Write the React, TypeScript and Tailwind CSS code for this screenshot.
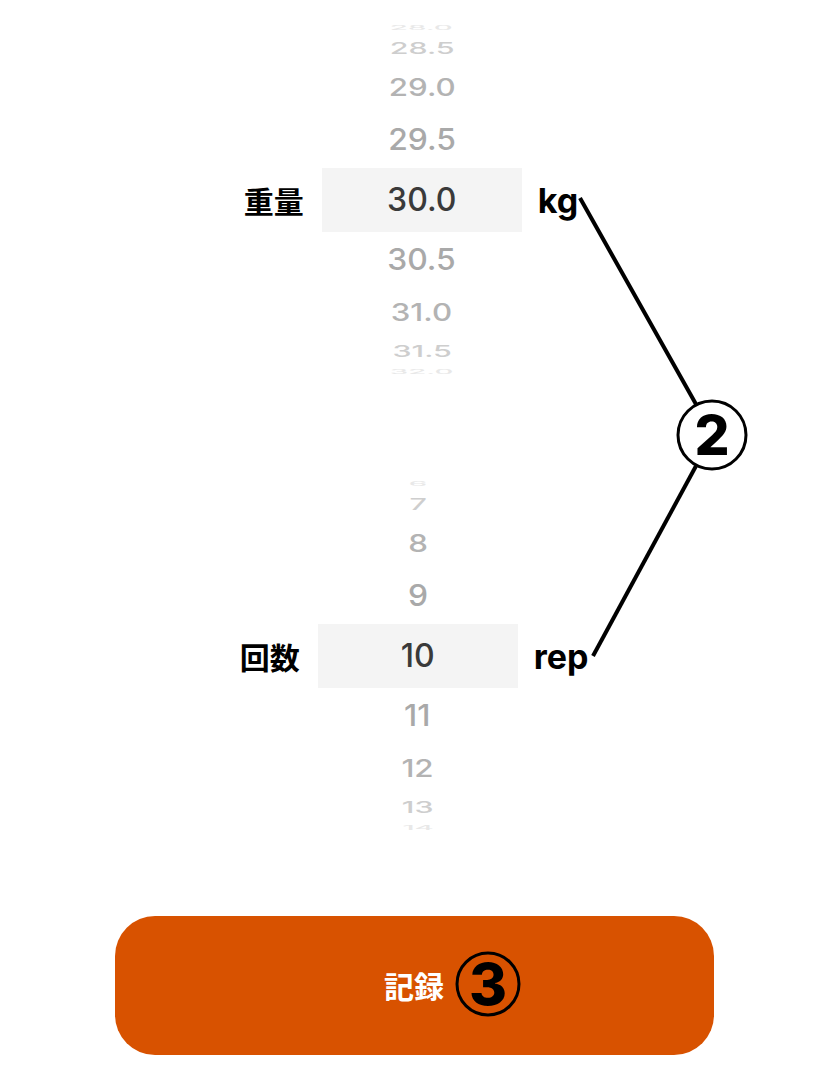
import React from "react";

const STEP = 20; // degrees between rows on the drum
const RADIUS = 175;
const SHADES = ["#3a3a3a", "#a9a9a9", "#b3b3b3", "#cecece", "#e8e8e8"];

const weights = ["28.0", "28.5", "29.0", "29.5", "30.0", "30.5", "31.0", "31.5", "32.0"];
const reps = ["6", "7", "8", "9", "10", "11", "12", "13", "14"];

const Wheel = ({ values, selected }: { values: string[]; selected: number }) => {
  return (
    <div className="grid h-[352px] w-[200px] place-items-center">
      <div className="col-start-1 row-start-1 h-16 w-[200px] bg-[#f4f4f4]" />
      {values.map((value, index) => {
        const k = index - selected;
        const rad = (k * STEP * Math.PI) / 180;
        const y = RADIUS * Math.sin(rad);
        const sy = Math.cos(rad);
        const sx = 0.9 + 0.1 * sy;
        return (
          <span
            key={value}
            className="col-start-1 row-start-1 font-['Inter',sans-serif] text-[32px] font-medium leading-none"
            style={{
              transform: `translateY(${y}px) scale(${sx}, ${sy})`,
              color: SHADES[Math.abs(k)],
            }}
          >
            {value}
          </span>
        );
      })}
    </div>
  );
};

const PickerRow = ({
  label,
  unit,
  values,
  selected,
  className = "",
}: {
  label: string;
  unit: string;
  values: string[];
  selected: number;
  className?: string;
}) => (
  <div className={`flex items-center justify-center ${className}`}>
    <span className="mr-[18px] font-['Noto_Sans_CJK_JP',sans-serif] text-[30px] font-bold text-black">
      {label}
    </span>
    <Wheel values={values} selected={selected} />
    <span className="ml-4 font-['Inter',sans-serif] text-[34px] font-bold text-black">
      {unit}
    </span>
  </div>
);

const Annotations = () => (
  <svg
    className="pointer-events-none absolute inset-0"
    width="828"
    height="1077"
    viewBox="0 0 828 1077"
  >
    <line x1="580" y1="198" x2="697" y2="406" stroke="#000" strokeWidth="4" />
    <line x1="696" y1="466" x2="593" y2="656" stroke="#000" strokeWidth="4" />
    <circle cx="712" cy="435" r="34" fill="#fff" stroke="#000" strokeWidth="3" />
    <text
      x="712"
      y="455"
      textAnchor="middle"
      fontFamily="Inter, sans-serif"
      fontWeight="800"
      fontSize="55"
      fill="#000"
    >
      2
    </text>
    <circle cx="488" cy="984" r="31" fill="none" stroke="#000" strokeWidth="3" />
    <text
      x="488"
      y="1005"
      textAnchor="middle"
      fontFamily="Inter, sans-serif"
      fontWeight="800"
      fontSize="58"
      fill="#000"
    >
      3
    </text>
  </svg>
);

export default function App() {
  return (
    <div className="relative mx-auto flex h-[1077px] w-[828px] flex-col bg-white pt-6">
      <PickerRow label="重量" unit="kg" values={weights} selected={4} className="pr-[6px]" />
      <div className="mt-[104px]">
        <PickerRow label="回数" unit="rep" values={reps} selected={4} />
      </div>
      <button className="mx-auto mt-[84px] flex h-[139px] w-[599px] items-center justify-center rounded-[40px] bg-[#d85200] font-['Noto_Sans_CJK_JP',sans-serif] text-[30px] font-bold text-white">
        記録
      </button>
      <Annotations />
    </div>
  );
}
